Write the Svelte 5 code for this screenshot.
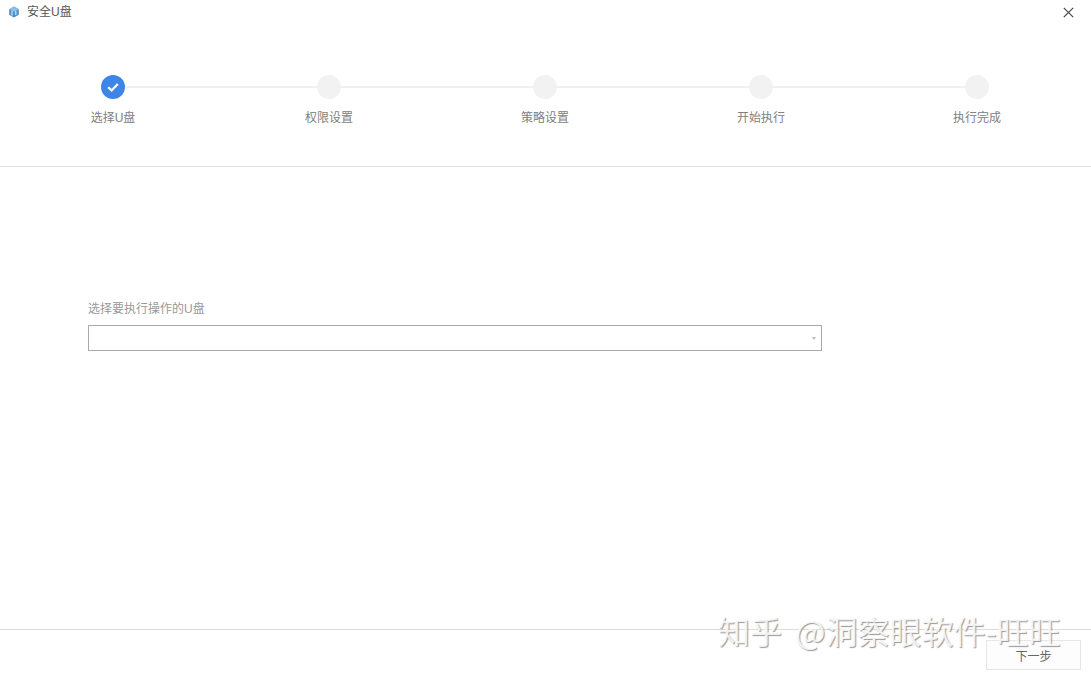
<script lang="ts">
  const steps = ["选择U盘", "权限设置", "策略设置", "开始执行", "执行完成"]
  const current = 0
</script>

<div class="window">
  <header class="titlebar">
    <div class="title">
      <svg class="logo" viewBox="0 0 12 12" width="12" height="12">
        <path d="M6 .6 10.8 3.2V8.8L6 11.4 1.200 8.800V3.200Z" fill="#4a8fd0" />
        <path d="M6 .6 10.800 3.200 6 5.800 1.200 3.200Z" fill="#8dbce6" />
        <path d="M4 4.800V9.600M7.800 4.800V9" stroke="#d6e8f7" stroke-width="1.200" fill="none" />
      </svg>
      <span>安全U盘</span>
    </div>
    <button class="close" aria-label="关闭">
      <svg viewBox="0 0 11 11" width="11" height="11">
        <path d="M.8.8 10.200 10.200M10.200.8.8 10.200" stroke="#444" stroke-width="1.200" fill="none" />
      </svg>
    </button>
  </header>

  <section class="stepper">
    {#each steps as step, i}
      <div class="step">
        <div class="track" class:first={i === 0} class:last={i === steps.length - 1}>
          <div class="dot" class:done={i <= current}>
            {#if i <= current}
              <svg viewBox="0 0 14 14" width="14" height="14">
                <path d="M2.200 7.200 5.600 10.400 11.800 4" stroke="#fff" stroke-width="2.200" fill="none" />
              </svg>
            {/if}
          </div>
        </div>
        <div class="label">{step}</div>
      </div>
    {/each}
  </section>

  <main class="content">
    <label class="field-label" for="disk">选择要执行操作的U盘</label>
    <div class="select" id="disk">
      <span class="arrow"></span>
    </div>
  </main>

  <footer class="footer">
    <button class="next">下一步</button>
    <div class="watermark">知乎 @洞察眼软件-旺旺</div>
  </footer>
</div>

<style>
  :global(body) {
    margin: 0;
    background: #fff;
  }

  .window {
    position: relative;
    width: 1091px;
    height: 678px;
    overflow: hidden;
    display: flex;
    flex-direction: column;
    font-family: "Liberation Sans", "Noto Sans CJK SC", sans-serif;
    font-size: 12px;
    background: #fff;
  }

  .titlebar {
    height: 24px;
    display: flex;
    align-items: center;
    justify-content: space-between;
    padding: 0 17px 0 8px;
    flex-shrink: 0;
  }

  .title {
    display: flex;
    align-items: center;
    gap: 7px;
    color: #555;
    line-height: 24px;
  }

  .logo {
    display: block;
  }

  .close {
    border: 0;
    padding: 0;
    background: none;
    display: flex;
  }

  .stepper {
    height: 143px;
    flex-shrink: 0;
    box-sizing: border-box;
    padding: 51px 6px 0 5px;
    display: grid;
    grid-template-columns: repeat(5, 216px);
    border-bottom: 1px solid #e3e3e3;
  }

  .step {
    display: flex;
    flex-direction: column;
    align-items: center;
  }

  .track {
    align-self: stretch;
    height: 24px;
    display: flex;
    justify-content: center;
    align-items: center;
    background: linear-gradient(#f0f0f0, #f0f0f0) center / 100% 2px no-repeat;
  }

  .track.first {
    background-size: 50% 2px;
    background-position: right center;
  }

  .track.last {
    background-size: 50% 2px;
    background-position: left center;
  }

  .dot {
    width: 24px;
    height: 24px;
    border-radius: 50%;
    background: #f2f2f2;
    display: flex;
    align-items: center;
    justify-content: center;
  }

  .dot.done {
    background: #3d86e8;
  }

  .label {
    margin-top: 11px;
    line-height: 16px;
    color: #808080;
  }

  .content {
    flex: 1;
    padding: 134px 0 0 88px;
    display: flex;
    flex-direction: column;
    align-items: flex-start;
  }

  .field-label {
    line-height: 16px;
    color: #999;
  }

  .select {
    margin-top: 8px;
    width: 734px;
    height: 26px;
    border: 1px solid #aaa;
    display: flex;
    align-items: center;
    justify-content: flex-end;
    padding-right: 5px;
    box-sizing: border-box;
  }

  .arrow {
    width: 0;
    height: 0;
    border-left: 2.5px solid transparent;
    border-right: 2.5px solid transparent;
    border-top: 3px solid #bbb;
  }

  .footer {
    height: 49px;
    flex-shrink: 0;
    box-sizing: border-box;
    border-top: 1px solid #dcdcdc;
    display: flex;
    justify-content: flex-end;
    align-items: flex-start;
    padding: 10px 10px 0 0;
  }

  .next {
    width: 95px;
    height: 30px;
    border: 1px solid #e6e6e6;
    background: #fdfdfd;
    color: #666;
    font: inherit;
    padding: 0;
  }

  .watermark {
    position: absolute;
    left: 718px;
    top: 612px;
    font-family: "Noto Sans CJK SC", sans-serif;
    font-size: 32px;
    word-spacing: 6px;
    line-height: 36px;
    white-space: nowrap;
    color: rgba(255, 255, 255, 0.85);
    text-shadow: 1px 1px 1px rgba(120, 120, 120, 0.75);
    pointer-events: none;
  }
</style>
